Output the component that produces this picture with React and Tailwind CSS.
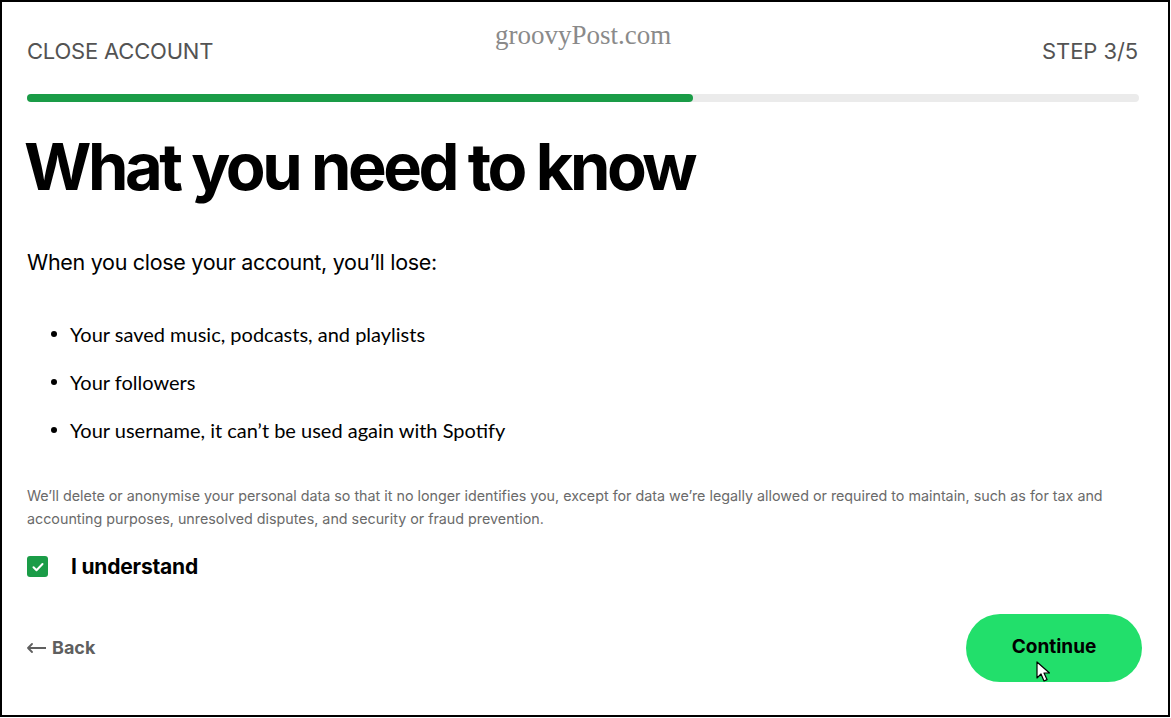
import React, {useState} from 'react';

const losses = [
    'Your saved music, podcasts, and playlists',
    'Your followers',
    'Your username, it can\u2019t be used again with Spotify',
];

export default function App() {
    const [agreed, setAgreed] = useState(true);
    const step = 3;
    const total = 5;

    return (
        <div className="w-[1171px] h-[718px] bg-white">
            <div className="w-[1170px] h-[717px] border-2 border-black bg-white flex flex-col px-[25px] font-['Inter',sans-serif]">
                <div className="relative flex items-center justify-between pt-[34px] h-[64px]">
                    <span className="text-[22px] text-[#535353] tracking-[-0.2px] leading-none">CLOSE ACCOUNT</span>
                    <span className="absolute left-[468px] top-[20px] text-[27px] text-[#8a8a8a] font-['Liberation_Serif',serif] leading-none">
                        groovyPost.com
                    </span>
                    <span className="text-[22px] text-[#535353] tracking-[-0.1px] leading-none mr-[5px]">STEP {step}/{total}</span>
                </div>

                <div className="mt-[28px] w-[1112px] h-[8px] rounded-full bg-[#ebebeb]">
                    <div className="h-full rounded-full bg-[#1a9c47]" style={{width: `${(666 / 1112) * 100}%`}} />
                </div>

                <h1 className="mt-[25px] ml-[-3px] text-[65px] font-bold text-black tracking-[-3.5px] leading-[80px]">
                    What you need to know
                </h1>

                <p className="mt-[41px] text-[21.5px] text-black leading-[28px] tracking-[-0.3px]">
                    When you close your account, you&rsquo;ll lose:
                </p>

                <ul className="mt-[44px] flex flex-col gap-[20px] font-['Lato',sans-serif] text-[20px] text-black">
                    {losses.map((item) => (
                        <li key={item} className="flex items-center h-[28px]">
                            <span className="w-[6px] h-[6px] rounded-full bg-black ml-[24px] mr-[13px]" />
                            {item}
                        </li>
                    ))}
                </ul>

                <p className="mt-[40px] text-[14.3px] text-[#6a6a6a] leading-[23px]">
                    We&rsquo;ll delete or anonymise your personal data so that it no longer identifies you, except for data we&rsquo;re legally allowed or required to maintain, such as for tax and accounting purposes, unresolved disputes, and security or fraud prevention.
                </p>

                <label className="mt-[21px] flex items-center gap-[23px] cursor-pointer">
                    <button
                        type="button"
                        onClick={() => setAgreed(!agreed)}
                        className={`w-[21px] h-[21px] rounded-[3px] flex items-center justify-center ${agreed ? 'bg-[#1a9c47]' : 'border border-[#878787]'}`}
                    >
                        {agreed && (
                            <svg width="14" height="14" viewBox="0 0 14 14" fill="none">
                                <path d="M2.5 7.2l3 3L11.5 4" stroke="white" strokeWidth="2" strokeLinecap="round" strokeLinejoin="round" />
                            </svg>
                        )}
                    </button>
                    <span className="text-[21px] font-bold text-black tracking-[-0.2px]">I understand</span>
                </label>

                <div className="mt-[31px] flex items-center justify-between">
                    <button type="button" className="flex items-center gap-[6px] text-[18px] font-bold text-[#5f5f5f]">
                        <svg width="19" height="10" viewBox="0 0 19 10" fill="none">
                            <path d="M1 5h18M5 1L1 5l4 4" stroke="#5f5f5f" strokeWidth="1.8" strokeLinecap="round" strokeLinejoin="round" />
                        </svg>
                        Back
                    </button>
                    <button
                        type="button"
                        className="relative w-[176px] h-[68px] rounded-full bg-[#22df6b] text-[19px] font-bold text-black mr-[1px]"
                    >
                        Continue
                        <svg className="absolute left-[70px] top-[47px]" width="14" height="22" viewBox="0 0 14 22">
                            <path d="M1 1v16l4-4 3 7 3-1.4-3-6.6h5.5z" fill="white" stroke="black" strokeWidth="1.2" strokeLinejoin="round" />
                        </svg>
                    </button>
                </div>
            </div>
        </div>
    );
}
